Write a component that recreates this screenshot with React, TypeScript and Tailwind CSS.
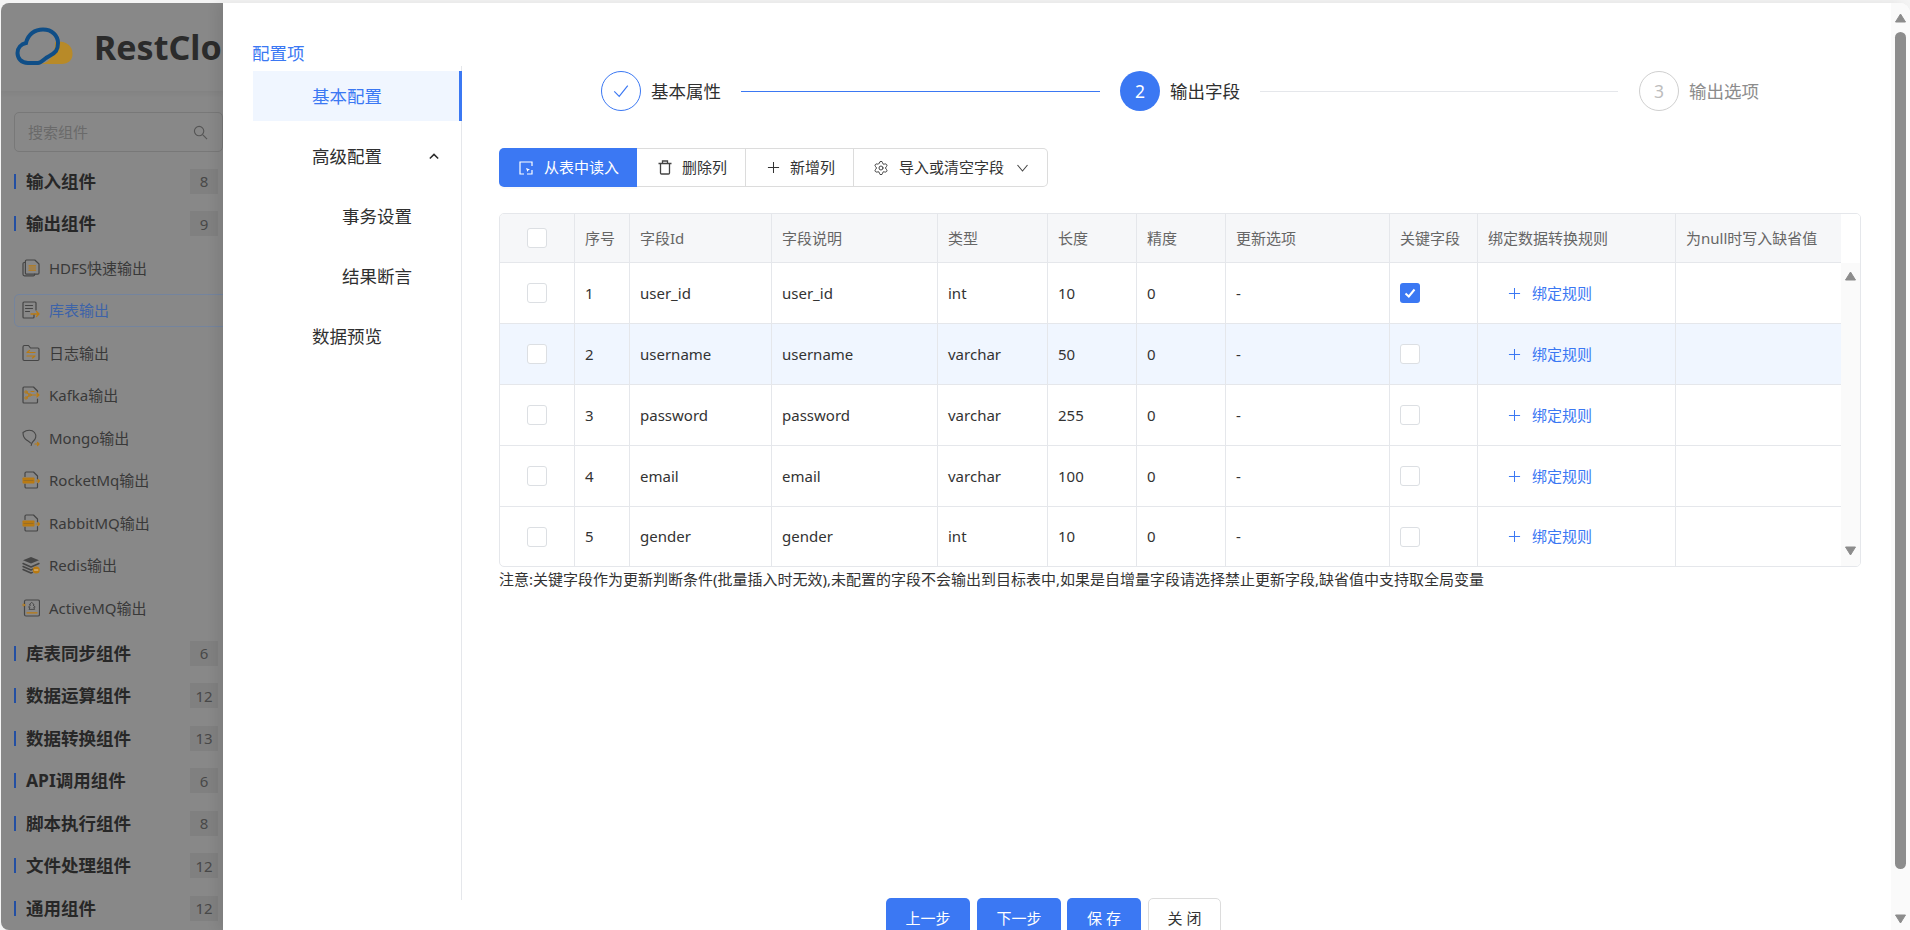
import React from "react";
import { Settings } from "lucide-react";

const S = "#454545";
const O = "#b97a12";

function Ico({ children, className = "" }: { children: React.ReactNode; className?: string }) {
  return (
    <svg viewBox="0 0 18 18" fill="none" strokeLinecap="round" strokeLinejoin="round" className={"w-[18px] h-[18px] shrink-0 " + className}>
      {children}
    </svg>
  );
}

const HdfsIcon = () => (
  <Ico>
    <path d="M3 3.500H2.200C1.500 3.500 1 4 1 4.700v10.600c0 .9.600 1.500 1.500 1.500h9c.7 0 1.200-.5 1.200-1.200V15" stroke={S} strokeWidth="1.200" />
    <path d="M4.600 1h8.200L17 5v9c0 .7-.5 1.200-1.200 1.200H4.600c-.7 0-1.200-.5-1.200-1.200V2.200C3.400 1.500 3.900 1 4.600 1z" stroke={S} strokeWidth="1.200" />
    <path d="M7 6.800h6.500M7 9h6.500M7 11.200h6.500" stroke={O} strokeWidth="1.200" />
  </Ico>
);
const TableIcon = () => (
  <Ico>
    <path d="M12 13.500V16c0 .6-.4 1-1 1H2c-.6 0-1-.4-1-1V2c0-.6.400-1 1-1h11c.6 0 1 .4 1 1v7" stroke={S} strokeWidth="1.200" />
    <path d="M3.500 4.500h7M3.500 7.500h7M3.500 10.500h4" stroke={S} strokeWidth="1.200" />
    <path d="M9 13h8M14.500 10.500L17 13l-2.500 2.500" stroke={O} strokeWidth="1.300" />
  </Ico>
);
const LogIcon = () => (
  <Ico>
    <path d="M1 3c0-.9.600-1.500 1.500-1.500h4l2 2.500h7.300c.7 0 1.200.5 1.200 1.200v10.100c0 .7-.5 1.200-1.200 1.200H2.200c-.7 0-1.200-.5-1.200-1.200V3z" stroke={S} strokeWidth="1.200" />
    <path d="M5 8.500h8M5 8.500l2.500-2M5 12h8M13 12l-2.500 2" stroke={O} strokeWidth="1.200" />
  </Ico>
);
const KafkaIcon = () => (
  <Ico>
    <path d="M15.500 6V5l-4-4H2C1.400 1 1 1.400 1 2v14c0 .6.400 1 1 1h12.500c.6 0 1-.4 1-1v-3" stroke={S} strokeWidth="1.200" />
    <circle cx="4" cy="6" r="1.200" stroke={O} strokeWidth="1" />
    <circle cx="4" cy="12" r="1.200" stroke={O} strokeWidth="1" />
    <circle cx="8" cy="9" r="1.200" stroke={O} strokeWidth="1" />
    <path d="M5 6.800L7 8.300M5 11.200L7 9.700M9.500 9H17M14.800 7L17 9l-2.200 2M9 5.500h3" stroke={O} strokeWidth="1.100" />
  </Ico>
);
const MongoIcon = () => (
  <Ico>
    <path d="M1 3.500C5 .5 10 .5 12.500 3.500c2.500 3 1.200 7-1.500 9-1 .8-1.500 1.500-1.800 4M1 3.500c0 4 1.200 6 3.500 7.500 2 1.300 3.700 2.300 4 3" stroke={S} strokeWidth="1.100" />
    <path d="M13 15h4M15.500 13.500L17 15l-1.500 1.500" stroke={O} strokeWidth="1.200" />
  </Ico>
);
const MqIcon = () => (
  <Ico>
    <path d="M3 5.500V2.200C3 1.500 3.500 1 4.200 1h7.300l4 4v3M15.500 12.500V16c0 .6-.4 1-1 1H4.200c-.7 0-1.200-.5-1.200-1.200V13" stroke={S} strokeWidth="1.200" />
    <rect x="0.500" y="6.500" width="12" height="6" rx="0.800" fill={O} />
    <path d="M2 9.500h9" stroke="#8f6a2a" strokeWidth="0.800" />
    <path d="M14 10h3.500M16 8.500l1.500 1.500L16 11.500" stroke={O} strokeWidth="1.100" />
  </Ico>
);
const RedisIcon = () => (
  <Ico>
    <path d="M9 1L17 4.200 9 7.400 1 4.200z" fill={S} />
    <path d="M1 7.500L9 11l8-3.500M1 10.500L9 14l3-1.300M1 13.500L9 17l1.500-.6" stroke={S} strokeWidth="1.400" />
    <circle cx="14.200" cy="14" r="3.500" fill={O} />
    <path d="M12.500 14h3.400" stroke="#e3c9a0" strokeWidth="1" />
  </Ico>
);
const ActiveIcon = () => (
  <Ico>
    <rect x="2.500" y="1" width="15" height="16" rx="1.500" stroke={S} strokeWidth="1.200" />
    <path d="M10 3.500l2 2.200-1 .3 2.200 2-1.500.4 1 2H7l1-2-1.500-.4 2.200-2-1-.3z" stroke={S} strokeWidth="0.900" />
    <path d="M5 13.800h10" stroke={O} strokeWidth="1.300" />
    <path d="M0.500 6h2.500M1.800 4.800L3 6 1.800 7.200" stroke={O} strokeWidth="1" />
  </Ico>
);

function Group({ label, count }: { label: string; count: number }) {
  return (
    <div className="h-[42.5px] flex items-center shrink-0">
      <div className="ml-[13px] w-[2px] h-[15px] bg-[#234fa3]" />
      <div className="ml-[10px] flex-1 text-[17.5px] leading-none font-bold text-[#272727]">{label}</div>
      <div className="mr-[5px] w-[28px] h-[25px] flex items-center justify-center bg-[#808080] text-[15px] text-[#484848]">{count}</div>
    </div>
  );
}

function Item({ icon, label, active }: { icon: React.ReactNode; label: string; active?: boolean }) {
  return (
    <div className="h-[42.5px] flex items-center pl-[13px] shrink-0">
      <div className={"w-[230px] h-[33px] shrink-0 flex items-center gap-[9px] pl-[7px] rounded-[5px] border text-[15px] " + (active ? "border-[#74849e] text-[#3d63a8]" : "border-transparent text-[#393939]")}>
        {icon}
        <span>{label}</span>
      </div>
    </div>
  );
}

function Sidebar() {
  return (
    <div className="w-[222px] ml-[1px] h-full shrink-0 bg-[#888888] rounded-tl-[8px] rounded-bl-[8px] overflow-hidden flex flex-col">
      <div className="h-[88px] shrink-0 flex items-center pl-[14px] shadow-[0_2px_6px_rgba(0,0,0,0.05)]">
        <svg viewBox="0 0 58 40" className="w-[58px] h-[40px] shrink-0">
          <path d="M40 15c8-2 17 2 17.500 11 .4 7-4 11-11 11H26c10-2 14-10 14-22z" fill="#b88a28" />
          <path d="M13 36C6 36 2.500 31 2.500 26c0-5 3.500-9 8.500-10C13 7 20 2.500 28 2.500c9 0 15 6 15 13.500 0 3-.6 6-2 8-2.500 3.500-7 5-10 7-3 2.300-5 5-8 5z" fill="none" stroke="#0f4e87" strokeWidth="4" />
        </svg>
        <span className="ml-[21px] text-[34px] leading-none font-bold text-[#2b2b2b] whitespace-nowrap">RestCloud</span>
      </div>
      <div className="mt-[21px] ml-[13px] w-[209px] h-[40px] shrink-0 rounded-[5px] border border-[#787878] flex items-center justify-between pl-[13px] pr-[14px]">
        <span className="text-[15px] text-[#6a6a6a]">搜索组件</span>
        <svg viewBox="0 0 16 16" fill="none" className="w-[15px] h-[15px]"><circle cx="6.500" cy="6.500" r="5" stroke="#555" strokeWidth="1.200" /><path d="M10.500 10.500L15 15" stroke="#555" strokeWidth="1.200" /></svg>
      </div>
      <div className="mt-[8px]">
        <Group label="输入组件" count={8} />
        <Group label="输出组件" count={9} />
        <div className="pt-[1.500px] pb-[3px]">
          <Item icon={<HdfsIcon />} label="HDFS快速输出" />
          <Item icon={<TableIcon />} label="库表输出" active />
          <Item icon={<LogIcon />} label="日志输出" />
          <Item icon={<KafkaIcon />} label="Kafka输出" />
          <Item icon={<MongoIcon />} label="Mongo输出" />
          <Item icon={<MqIcon />} label="RocketMq输出" />
          <Item icon={<MqIcon />} label="RabbitMQ输出" />
          <Item icon={<RedisIcon />} label="Redis输出" />
          <Item icon={<ActiveIcon />} label="ActiveMQ输出" />
        </div>
        <Group label="库表同步组件" count={6} />
        <Group label="数据运算组件" count={12} />
        <Group label="数据转换组件" count={13} />
        <Group label="API调用组件" count={6} />
        <Group label="脚本执行组件" count={8} />
        <Group label="文件处理组件" count={12} />
        <Group label="通用组件" count={12} />
      </div>
    </div>
  );
}

function MenuColumn() {
  const row = "h-[50px] mb-[10px] flex items-center text-[17.5px] text-[#2f2f2f]";
  return (
    <div className="w-[239px] shrink-0 pl-[30px] pt-[38px] h-[897px] flex flex-col">
      <div className="-ml-px h-[25px] leading-[25px] text-[17.5px] text-[#3b78f3]">配置项</div>
      <div className="flex-1 border-r border-[#e5e7eb] pt-[5px]">
        <div className="h-[50px] mb-[10px] -mr-px flex items-center pl-[59px] text-[17.5px] text-[#3b78f3] bg-[#f0f6ff] border-r-[3px] border-[#3b78f3]">基本配置</div>
        <div className={row + " pl-[59px] justify-between pr-[22px]"}>
          <span>高级配置</span>
          <svg viewBox="0 0 12 8" fill="none" className="w-[10px] h-[7px]"><path d="M1 6.500L6 1.500l5 5" stroke="#2b2b2b" strokeWidth="1.800" /></svg>
        </div>
        <div className={row + " pl-[89px]"}>事务设置</div>
        <div className={row + " pl-[89px]"}>结果断言</div>
        <div className={row + " pl-[59px]"}>数据预览</div>
      </div>
    </div>
  );
}

function Steps() {
  return (
    <div className="flex items-center h-[40px] pl-[102px]">
      <div className="w-[40px] h-[40px] rounded-full border border-[#3b78f3] flex items-center justify-center">
        <svg viewBox="0 0 20 20" fill="none" className="w-[18px] h-[18px]"><path d="M2.500 10.500L8 16 17.500 4" stroke="#3b78f3" strokeWidth="1.300" /></svg>
      </div>
      <span className="ml-[10px] w-[70px] text-[17.5px] text-[#2f2f2f] whitespace-nowrap">基本属性</span>
      <div className="ml-[20px] w-[359px] h-px bg-[#3b78f3]" />
      <div className="ml-[20px] w-[40px] h-[40px] rounded-full bg-[#3b78f3] text-white text-[17.5px] flex items-center justify-center">2</div>
      <span className="ml-[10px] w-[70px] text-[17.5px] text-[#2f2f2f] whitespace-nowrap">输出字段</span>
      <div className="ml-[20px] w-[358px] h-px bg-[#e5e7eb]" />
      <div className="ml-[21px] w-[40px] h-[40px] rounded-full border border-[#cfcfcf] text-[#bdbdbd] text-[17.5px] flex items-center justify-center">3</div>
      <span className="ml-[10px] w-[70px] text-[17.5px] text-[#8c8c8c] whitespace-nowrap">输出选项</span>
    </div>
  );
}

function Toolbar() {
  const btn = "h-[39px] flex items-center border-y border-r border-[#dcdcdc] text-[15px] text-[#333] bg-white";
  return (
    <div className="flex mt-[37px] h-[39px]">
      <div className="w-[138px] h-[39px] pl-[20px] flex items-center gap-[11px] bg-[#3b78f3] text-white text-[15px] rounded-l-[5px] shadow-[0_2px_0_rgba(0,0,0,0.02)]">
        <svg viewBox="0 0 14 14" fill="none" className="w-[14px] h-[14px]"><path d="M13 5V1H1v12h4M8 13h5V9" stroke="#fff" strokeWidth="1.200" /><path d="M7 7l4 1.500L9.300 9.300 8.500 11z" fill="#fff" /></svg>
        <span>从表中读入</span>
      </div>
      <div className={btn + " w-[109px] pl-[21px] gap-[10px]"}>
        <svg viewBox="0 0 14 15" fill="none" className="w-[14px] h-[15px]"><path d="M.5 3.500h13M4.500 3.500V1h5v2.500M2.500 3.500v9.500c0 .6.400 1 1 1h7c.6 0 1-.4 1-1V3.500" stroke="#444" strokeWidth="1.300" /></svg>
        <span>删除列</span>
      </div>
      <div className={btn + " w-[108px] pl-[21px] gap-[10px]"}>
        <svg viewBox="0 0 14 14" fill="none" className="w-[13px] h-[13px]"><path d="M7 1v12M1 7h12" stroke="#333" strokeWidth="1.100" /></svg>
        <span>新增列</span>
      </div>
      <div className="h-[39px] w-[194px] flex items-center border border-l-0 border-[#dcdcdc] rounded-r-[5px] text-[15px] text-[#333] pl-[19px]">
        <Settings size={16} strokeWidth={1.500} color="#444" />
        <span className="ml-[10px]">导入或清空字段</span>
        <svg viewBox="0 0 12 8" fill="none" className="ml-[12px] w-[13px] h-[8px]"><path d="M1 1l5 6L11 1" stroke="#444" strokeWidth="1.100" /></svg>
      </div>
    </div>
  );
}

function Check({ on }: { on?: boolean }) {
  return on ? (
    <div className="w-[20px] h-[20px] rounded-[3px] bg-[#3b78f3] flex items-center justify-center">
      <svg viewBox="0 0 14 14" fill="none" className="w-[14px] h-[14px]"><path d="M2.500 7.500L5.800 10.500 11.500 3.500" stroke="#fff" strokeWidth="2" /></svg>
    </div>
  ) : (
    <div className="w-[20px] h-[20px] rounded-[3px] border border-[#dcdfe3] bg-white" />
  );
}

const HEADS = ["序号", "字段Id", "字段说明", "类型", "长度", "精度", "更新选项", "关键字段", "绑定数据转换规则", "为null时写入缺省值"];
const ROWS = [
  ["1", "user_id", "user_id", "int", "10", "0", "-"],
  ["2", "username", "username", "varchar", "50", "0", "-"],
  ["3", "password", "password", "varchar", "255", "0", "-"],
  ["4", "email", "email", "varchar", "100", "0", "-"],
  ["5", "gender", "gender", "int", "10", "0", "-"],
];

function Table() {
  const line = "border-r border-[#e5e7eb]";
  return (
    <div className="mt-[26px] h-[354px] border border-[#e5e7eb] rounded-[5px] flex overflow-hidden">
      <table className="table-fixed w-[1341px] shrink-0 border-separate border-spacing-0">
        <colgroup>
          <col className="w-[75px]" /><col className="w-[55px]" /><col className="w-[142px]" /><col className="w-[166px]" /><col className="w-[110px]" />
          <col className="w-[89px]" /><col className="w-[89px]" /><col className="w-[164px]" /><col className="w-[88px]" /><col className="w-[198px]" /><col className="w-[165px]" />
        </colgroup>
        <thead>
          <tr className="h-[49px] bg-[#f6f7f9]">
            <th className={line + " border-b font-normal"}><div className="flex justify-center pr-px"><Check /></div></th>
            {HEADS.map((h, i) => (
              <th key={h} className={"border-b border-[#e5e7eb] font-normal text-left text-[15px] text-[#666] pl-[10px] whitespace-nowrap overflow-hidden " + (i < 9 ? "border-r" : "")}>{h}</th>
            ))}
          </tr>
        </thead>
        <tbody>
          {ROWS.map((r, i) => (
            <tr key={r[0]} className={i === 4 ? "h-[59px]" : "h-[61px]" + (i === 1 ? " bg-[#f0f6ff]" : "")}>
              <td className={line + (i < 4 ? " border-b" : "")}><div className="flex justify-center pr-px"><Check /></div></td>
              {r.map((c, j) => (
                <td key={j} className={line + " pl-[10px] text-[15px] text-[#333]" + (i < 4 ? " border-b" : "")}>{c}</td>
              ))}
              <td className={line + " pl-[10px]" + (i < 4 ? " border-b" : "")}><Check on={i === 0} /></td>
              <td className={line + (i < 4 ? " border-b" : "")}>
                <div className="flex items-center pl-[30px] gap-[11px] text-[15px] text-[#3b78f3]">
                  <svg viewBox="0 0 14 14" fill="none" className="w-[13px] h-[13px]"><path d="M7 1v12M1 7h12" stroke="#3b78f3" strokeWidth="1.100" /></svg>
                  <span>绑定规则</span>
                </div>
              </td>
              <td className={i < 4 ? "border-b border-[#e5e7eb]" : ""} />
            </tr>
          ))}
        </tbody>
      </table>
      <div className="flex-1 flex flex-col">
        <div className="h-[49px] bg-white shrink-0" />
        <div className="flex-1 bg-[#fafafa] flex flex-col items-center justify-between pt-[8px] pb-[10px]">
          <svg viewBox="0 0 12 10" className="w-[13px] h-[10px]"><path d="M6 1L11 9H1z" fill="#8c8c8c" stroke="#8c8c8c" strokeLinejoin="round" /></svg>
          <svg viewBox="0 0 12 10" className="w-[13px] h-[10px]"><path d="M6 9L11 1H1z" fill="#8c8c8c" stroke="#8c8c8c" strokeLinejoin="round" /></svg>
        </div>
      </div>
    </div>
  );
}

function PageScrollbar() {
  return (
    <div className="w-[19px] h-full shrink-0 bg-[#fafafa] rounded-tr-[10px] flex flex-col items-center pt-[10px] pb-[6px]">
      <svg viewBox="0 0 12 10" className="w-[13px] h-[10px] shrink-0"><path d="M6 1L11 9H1z" fill="#8c8c8c" stroke="#8c8c8c" strokeLinejoin="round" /></svg>
      <div className="mt-[9px] w-[11px] h-[837px] shrink-0 rounded-full bg-[#8c8c8c]" />
      <div className="flex-1" />
      <svg viewBox="0 0 12 10" className="w-[13px] h-[10px] shrink-0"><path d="M6 9L11 1H1z" fill="#8c8c8c" stroke="#8c8c8c" strokeLinejoin="round" /></svg>
    </div>
  );
}

function Footer() {
  const blue = "h-[40px] rounded-[5px] bg-[#3b78f3] text-white text-[15px] flex items-center justify-center";
  return (
    <div className="flex gap-[7px] pl-[663px] h-[40px] shrink-0">
      <div className={blue + " w-[84px]"}>上一步</div>
      <div className={blue + " w-[84px]"}>下一步</div>
      <div className={blue + " w-[74px] -ml-px"}>保 存</div>
      <div className="h-[40px] w-[73px] rounded-[5px] border border-[#dcdcdc] bg-white text-[#333] text-[15px] flex items-center justify-center">关 闭</div>
    </div>
  );
}

export default function App() {
  return (
    <div className="w-[1910px] h-[930px] overflow-hidden bg-[#f4f4f4] pt-[3px] flex [font-family:'Noto_Sans','Noto_Sans_CJK_SC',sans-serif]">
      <Sidebar />
      <div className="flex-1 min-w-0 h-full flex relative shadow-[-6px_0_12px_rgba(0,0,0,0.08)] rounded-tr-[10px] bg-white">
        <div className="flex-1 min-w-0 h-[967px] flex flex-col">
          <div className="h-[895px] shrink-0 flex">
            <MenuColumn />
            <div className="flex-1 min-w-0 pl-[37px] pr-[30px] pt-[68px]">
              <Steps />
              <Toolbar />
              <Table />
              <div className="mt-px leading-[22px] text-[15px] text-[#333] whitespace-nowrap">注意:关键字段作为更新判断条件(批量插入时无效),未配置的字段不会输出到目标表中,如果是自增量字段请选择禁止更新字段,缺省值中支持取全局变量</div>
            </div>
          </div>
          <Footer />
        </div>
        <PageScrollbar />
      </div>
    </div>
  );
}
